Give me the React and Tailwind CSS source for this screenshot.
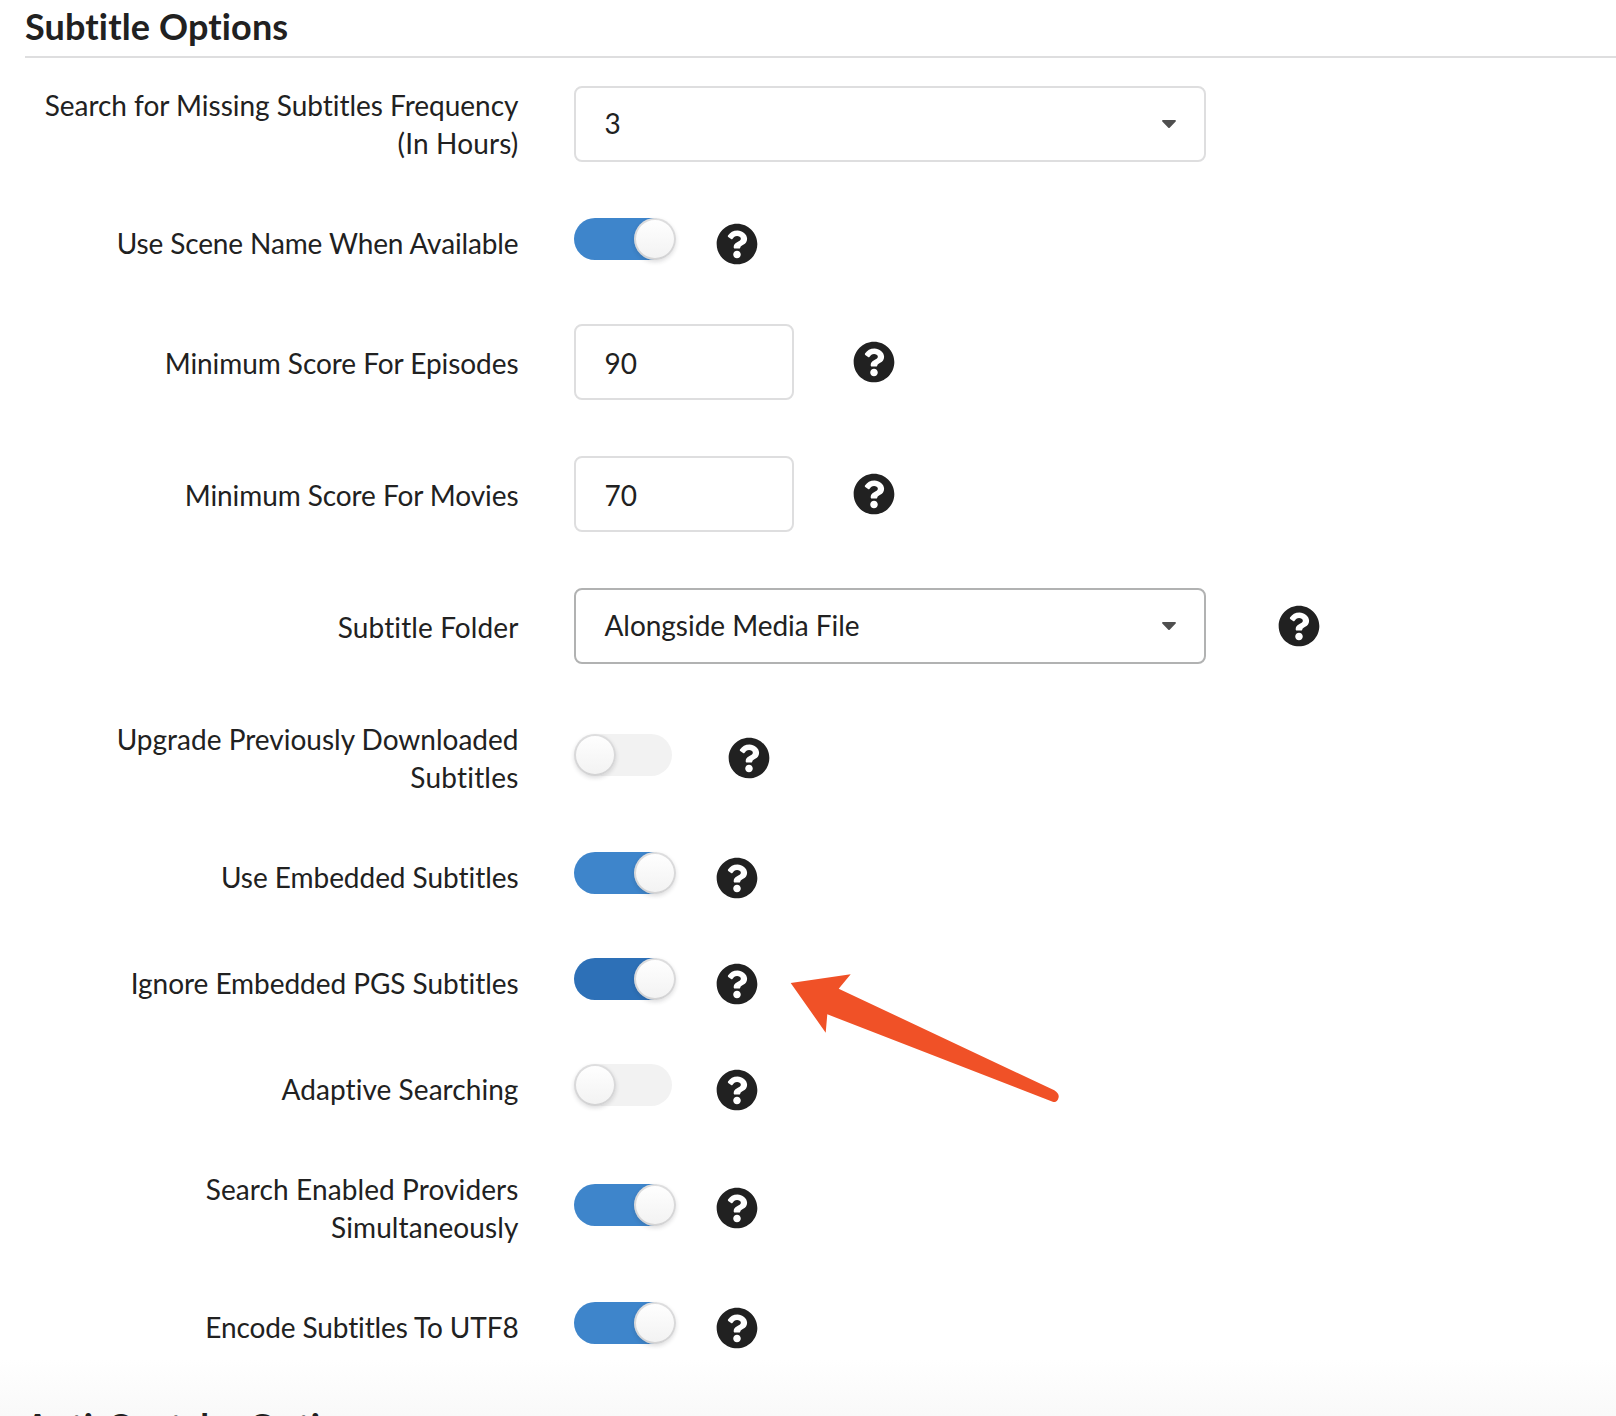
import { FaCaretDown, FaQuestionCircle } from "react-icons/fa";

function Toggle({ on, active }) {
  if (!on) {
    return (
      <div className="flex h-[42px] w-[98px] shrink-0 rounded-full bg-[#f2f2f2]">
        <Knob />
      </div>
    );
  }
  return (
    <div
      className={
        "flex h-[42px] w-[98px] shrink-0 rounded-full pl-[60px] " +
        (active ? "bg-[#2d70b7]" : "bg-[#3e85cb]")
      }
    >
      <Knob />
    </div>
  );
}

function Knob() {
  return (
    <div className="size-[42px] shrink-0 rounded-full bg-linear-to-b from-white to-[#f2f2f2] shadow-[0_2px_4px_0_rgba(34,36,38,0.15),inset_0_0_0_2px_rgba(34,36,38,0.15)]" />
  );
}

function Select({ value, active }) {
  return (
    <div
      className={
        "flex h-[76px] w-[632px] shrink-0 items-center justify-between rounded-lg border-2 bg-white pr-[23px] pb-[2px] pl-[28.5px] " +
        (active ? "border-[#b1b2b2]" : "border-[#dededf]")
      }
    >
      <span className="leading-[28px] tracking-[-0.04px]">{value}</span>
      <FaCaretDown className="size-6 text-[#4f4f4f]" />
    </div>
  );
}

function NumberBox({ value }) {
  return (
    <div className="flex h-[76px] w-[220px] shrink-0 items-center rounded-lg border-2 border-[#dededf] bg-white pt-[2px] pl-[28.5px]">
      {value}
    </div>
  );
}

function Help({ className }) {
  return <FaQuestionCircle className={"size-[42px] shrink-0 " + className} />;
}

function Row({ label, tall, low, tracking = "", children }) {
  return (
    <div className={"flex " + (tall ? "h-[76px]" : "h-[50px]")}>
      <div
        className={
          "mr-[55.5px] flex w-[518.5px] shrink-0 items-center justify-end text-right leading-[38px] " +
          (low ? "pt-[2px] " : "") +
          tracking
        }
      >
        <div>{label}</div>
      </div>
      <div className="flex items-start">{children}</div>
    </div>
  );
}

function Heading({ children }) {
  return (
    <h2 className="ml-[25px] h-[58px] shrink-0 border-b-2 border-[#dededf] pt-[3px] text-[36px] leading-[46px] font-bold tracking-[0.14px]">
      {children}
    </h2>
  );
}

export default function App() {
  return (
    <div className="relative flex h-[1416px] w-[1616px] flex-col overflow-hidden bg-linear-to-b from-white from-[96%] to-[#f9f9f9] font-['Lato',sans-serif] text-[28px] text-[#212121] [font-variant-ligatures:none]">
      <Heading>Subtitle Options</Heading>
      <div className="mt-7 flex shrink-0 flex-col gap-14">
        <Row
          tall
          label={
            <>
              <span className="tracking-[-0.015px]">
                Search for Missing Subtitles Frequency
              </span>
              <br />
              <span className="tracking-[0.15px]">(In Hours)</span>
            </>
          }
        >
          <Select value="3" />
        </Row>
        <Row label="Use Scene Name When Available" tracking="tracking-[-0.125px]">
          <Toggle on />
          <Help className="mt-[5.3px] ml-[43.6px]" />
        </Row>
        <Row tall low label="Minimum Score For Episodes" tracking="tracking-[-0.06px]">
          <NumberBox value="90" />
          <Help className="mt-[17.3px] ml-[59px]" />
        </Row>
        <Row tall low label="Minimum Score For Movies" tracking="tracking-[-0.08px]">
          <NumberBox value="70" />
          <Help className="mt-[17.3px] ml-[59px]" />
        </Row>
        <Row tall low label="Subtitle Folder" tracking="tracking-[0.1px]">
          <Select value="Alongside Media File" active />
          <Help className="mt-[17.3px] ml-[71.6px]" />
        </Row>
        <Row
          tall
          label={
            <>
              Upgrade Previously Downloaded
              <br />
              <span className="tracking-[0.2px]">Subtitles</span>
            </>
          }
        >
          <div className="pt-[14px]">
            <Toggle />
          </div>
          <Help className="mt-[17.3px] ml-[56px]" />
        </Row>
        <Row label="Use Embedded Subtitles" tracking="tracking-[-0.05px]">
          <Toggle on />
          <Help className="mt-[5.3px] ml-[43.6px]" />
        </Row>
        <Row label="Ignore Embedded PGS Subtitles" tracking="tracking-[-0.05px]">
          <Toggle on active />
          <Help className="mt-[5.3px] ml-[43.6px]" />
        </Row>
        <Row label="Adaptive Searching" tracking="tracking-[0.06px]">
          <Toggle />
          <Help className="mt-[5.3px] ml-[43.6px]" />
        </Row>
        <Row
          tall
          tracking="tracking-[0.1px]"
          label={
            <>
              Search Enabled Providers
              <br />
              Simultaneously
            </>
          }
        >
          <div className="pt-[14px]">
            <Toggle on />
          </div>
          <Help className="mt-[17.3px] ml-[43.6px]" />
        </Row>
        <Row label="Encode Subtitles To UTF8" tracking="tracking-[-0.12px]">
          <Toggle on />
          <Help className="mt-[5.3px] ml-[43.6px]" />
        </Row>
      </div>
      <div className="mt-12 shrink-0">
        <Heading>Anti-Captcha Options</Heading>
      </div>
      <svg
        className="absolute top-[970px] left-[786px]"
        width="280"
        height="140"
        viewBox="786 970 280 140"
        fill="#f05127"
      >
        <path d="M790.7 983L850.7 974.3L838.7 988.7L1054.3 1090.3Q1059.5 1093.5 1058.6 1097.5Q1057.3 1103 1052.7 1101.7L827.3 1014.3L825.7 1032.7Z" />
      </svg>
    </div>
  );
}
